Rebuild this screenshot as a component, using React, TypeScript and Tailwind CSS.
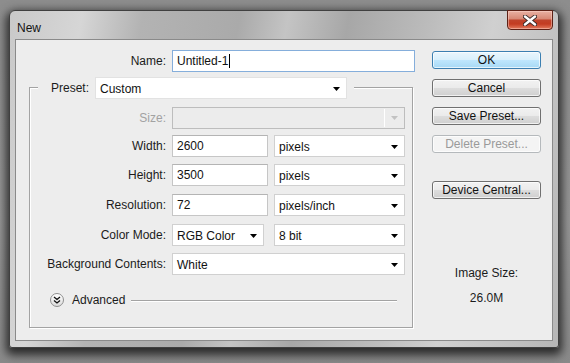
import React from 'react';

const Caret = ({ disabled = false }: { disabled?: boolean }) => (
  <svg width="7" height="4" viewBox="0 0 7 4" className="shrink-0">
    <polygon points="0,0 7,0 3.5,4" fill={disabled ? '#c2c2c2' : '#000'} />
  </svg>
);

const TextBox = ({ value, width }: { value: string; width: string }) => (
  <div className={`${width} h-[22px] ml-[6px] bg-white border border-[#c6c6c6] border-t-[#b4b4b4] flex items-center pl-[4px] text-[12px] text-[#111]`}>
    {value}
  </div>
);

const Select = ({ value, width, className = '' }: { value: string; width: string; className?: string }) => (
  <div className={`${width} h-[22px] bg-white border border-[#d0d0d0] flex items-center justify-between pl-[4px] pr-[6px] pt-[2px] text-[12px] text-[#111] ${className}`}>
    <span>{value}</span>
    <Caret />
  </div>
);

const Row = ({ label, mt, muted = false, children }: { label: string; mt: string; muted?: boolean; children: React.ReactNode }) => (
  <div className={`flex items-center h-[22px] ${mt}`}>
    <div className={`w-[136px] text-right text-[12px] ${muted ? 'text-[#a2a2a2]' : 'text-[#1b1b1b]'}`}>{label}</div>
    {children}
  </div>
);

const Button = ({ label, mt, kind = 'normal' }: { label: string; mt: string; kind?: 'normal' | 'default' | 'disabled' }) => {
  const styles = {
    normal: 'border-[#707070] text-[#111] bg-[linear-gradient(#f2f2f2_0%,#ebebeb_48%,#dddddd_52%,#cfcfcf_100%)]',
    default: 'border-[#3c7fb1] text-[#111] bg-[linear-gradient(#eaf6fd_0%,#d9f0fc_48%,#bee6fd_52%,#a7d9f5_100%)]',
    disabled: 'border-[#b5b9bc] text-[#9a9a9a] bg-[#f4f4f4]',
  }[kind];
  return (
    <div className={`${mt} h-[18px] w-[109px] rounded-[3px] border ${styles} shadow-[inset_0_0_0_1px_rgba(255,255,255,0.7)] flex items-center justify-center text-[12px]`}>
      {label}
    </div>
  );
};

export default function App() {
  return (
    <div
      className="w-[570px] h-[363px] overflow-hidden bg-[linear-gradient(180deg,#8d8d8d_0%,#979797_60%,#8a8a8a_100%)] pt-[10px] pl-[9px]"
      style={{ fontFamily: '"Liberation Sans", Arial, sans-serif' }}
    >
      <div className="w-[550px] h-[338px] rounded-t-[6px] rounded-b-[3px] border border-[#404040] bg-[linear-gradient(100deg,#c9c9c9_0%,#d6d6d6_12%,#b3b3b3_22%,#aaaaaa_38%,#c4c4c4_46%,#a7a7a7_56%,#bdbdbd_70%,#d0d0d0_80%,#b6b6b6_100%)] shadow-[0_4px_10px_3px_rgba(0,0,0,0.7)] flex flex-col">
        {/* title bar */}
        <div className="relative h-[28px] shrink-0">
          <div className="pl-[7px] pt-[8px] text-[12px] text-[#141414]">New</div>
          <div className="absolute top-[-1px] right-[5px] w-[46px] h-[20px] rounded-b-[4px] border border-[#5c2116] bg-[linear-gradient(#e9b1a3_0%,#d88a77_42%,#c0432b_52%,#c33c22_72%,#e37b5e_100%)] shadow-[inset_0_0_0_1px_rgba(255,220,210,0.45)] flex items-center justify-center">
            <svg width="14" height="11" viewBox="0 0 14 11">
              <path d="M2 1.5 L12 9.5 M12 1.5 L2 9.5" stroke="#3a2a28" strokeWidth="4.2" strokeLinecap="round" />
              <path d="M2 1.5 L12 9.5 M12 1.5 L2 9.5" stroke="#ffffff" strokeWidth="2.4" strokeLinecap="round" />
            </svg>
          </div>
        </div>

        {/* client area */}
        <div className="mx-[5px] h-[302px] border border-[#8a8a8a] bg-[#ededed] flex">
          <div className="w-[404px] flex flex-col">
            <div className="mt-[10px] flex items-center h-[22px]">
              <div className="w-[150px] text-right text-[12px] text-[#1b1b1b]">Name:</div>
              <div className="w-[243px] h-[22px] ml-[6px] bg-white border border-[#85aedb] flex items-center pl-[4px] text-[12px] text-[#111]">
                Untitled-1
                <span className="inline-block w-px h-[14px] bg-black ml-px" />
              </div>
            </div>

            <div className="mt-[15px] ml-[13px] w-[384px] h-[241px] border border-[#a3a3a3] shadow-[1px_1px_0_#ffffff,inset_1px_1px_0_#ffffff] flex flex-col">
              <div className="-mt-[11px] ml-[8px] self-start flex items-center h-[21px] bg-[#ededed] pr-[7px]">
                <div className="w-[51px] text-right text-[12px] text-[#1b1b1b]">Preset:</div>
                <Select value="Custom" width="w-[252px]" className="ml-[6px] h-[21px] border-[#e2e2e2]" />
              </div>

              <Row label="Size:" mt="mt-[9px]" muted>
                <div className="ml-[6px] w-[233px] h-[22px] border border-[#bdbdbd] bg-[#ececec] flex items-center justify-end">
                  <div className="w-px h-[18px] bg-white mr-[6px]" />
                  <div className="mr-[6px]"><Caret disabled /></div>
                </div>
              </Row>

              <Row label="Width:" mt="mt-[6px]">
                <TextBox value="2600" width="w-[96px]" />
                <Select value="pixels" width="w-[131px]" className="ml-[6px]" />
              </Row>
              <Row label="Height:" mt="mt-[7px]">
                <TextBox value="3500" width="w-[96px]" />
                <Select value="pixels" width="w-[131px]" className="ml-[6px]" />
              </Row>
              <Row label="Resolution:" mt="mt-[8px]">
                <TextBox value="72" width="w-[96px]" />
                <Select value="pixels/inch" width="w-[131px]" className="ml-[6px]" />
              </Row>
              <Row label="Color Mode:" mt="mt-[8px]">
                <Select value="RGB Color" width="w-[92px]" className="ml-[6px]" />
                <Select value="8 bit" width="w-[131px]" className="ml-[10px]" />
              </Row>
              <Row label="Background Contents:" mt="mt-[7px]">
                <Select value="White" width="w-[233px]" className="ml-[6px]" />
              </Row>

              <div className="mt-[18px] pl-[20px] flex items-center h-[14px]">
                <div className="w-[14px] h-[14px] rounded-full border border-[#8f8f8f] bg-[linear-gradient(#ffffff,#dcdcdc)] flex items-center justify-center shrink-0">
                  <svg width="8" height="8" viewBox="0 0 8 8">
                    <path d="M1 1 L4 3.5 L7 1 M1 4.5 L4 7 L7 4.5" stroke="#111" strokeWidth="1.3" fill="none" />
                  </svg>
                </div>
                <span className="ml-[8px] text-[12px] text-[#1b1b1b]">Advanced</span>
                <div className="ml-[6px] mr-[15px] flex-1 h-px bg-[#a3a3a3] shadow-[0_1px_0_#ffffff]" />
              </div>
            </div>
          </div>

          <div className="ml-[12px] w-[109px] flex flex-col items-center">
            <Button label="OK" mt="mt-[11px]" kind="default" />
            <Button label="Cancel" mt="mt-[10px]" />
            <Button label="Save Preset..." mt="mt-[10px]" />
            <Button label="Delete Preset..." mt="mt-[10px]" kind="disabled" />
            <Button label="Device Central..." mt="mt-[28px]" />
            <div className="mt-[67px] leading-[14px] text-[12px] text-[#1b1b1b]">Image Size:</div>
            <div className="mt-[11px] leading-[14px] text-[12px] text-[#1b1b1b]">26.0M</div>
          </div>
        </div>
      </div>
    </div>
  );
}
